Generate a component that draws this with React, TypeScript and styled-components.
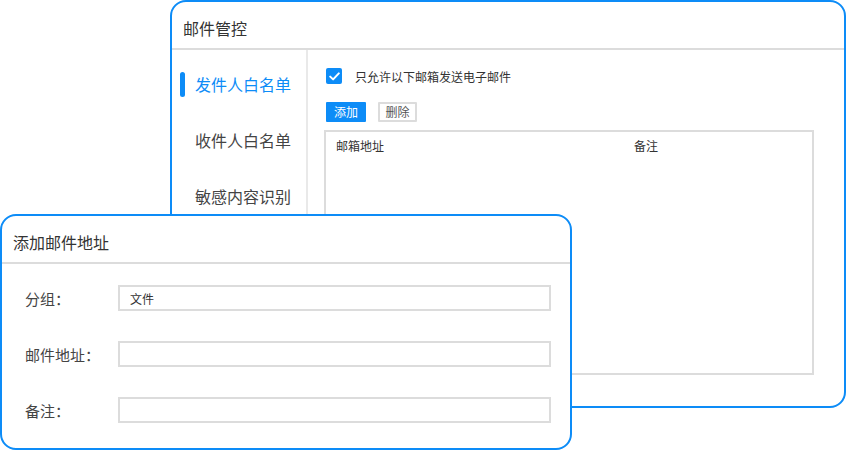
import React from "react";
import styled, { createGlobalStyle } from "styled-components";

const BLUE = "#0d8cf7";
const LINE = "#dcdcdc";
const TEXT = "#3a3a3a";

const GlobalStyle = createGlobalStyle`
  html, body {
    margin: 0;
    padding: 0;
    background: #ffffff;
  }
  body {
    font-family: "Noto Sans CJK SC", "Noto Sans", sans-serif;
    color: ${TEXT};
  }
  * { box-sizing: border-box; }
`;

const Desktop = styled.div`
  position: relative;
  width: 846px;
  height: 450px;
  overflow: hidden;
  background: #fff;
`;

const Window = styled.section<{ $left: number; $top: number; $w: number; $h: number; $z: number }>`
  position: absolute;
  left: ${(p) => p.$left}px;
  top: ${(p) => p.$top}px;
  width: ${(p) => p.$w}px;
  height: ${(p) => p.$h}px;
  z-index: ${(p) => p.$z};
  border: 2px solid ${BLUE};
  border-radius: 16px;
  background: #fff;
  display: flex;
  flex-direction: column;
  overflow: hidden;
`;

const WindowHeader = styled.header`
  height: 48px;
  padding: 6px 11px 0;
  display: flex;
  align-items: center;
  border-bottom: 2px solid ${LINE};
  font-size: 16px;
  color: #333;
  flex-shrink: 0;
`;

const BackBody = styled.div`
  flex: 1;
  display: flex;
`;

const Sidebar = styled.nav`
  width: 136px;
  border-right: 2px solid #e9e9e9;
  padding-top: 6px;
  display: flex;
  flex-direction: column;
  flex-shrink: 0;
`;

const NavItem = styled.div<{ $active?: boolean }>`
  height: 56px;
  display: flex;
  align-items: center;
  gap: 10px;
  padding-left: 8px;
  font-size: 16px;
  color: ${(p) => (p.$active ? BLUE : "#444")};
`;

const NavBar = styled.span<{ $active?: boolean }>`
  width: 5px;
  height: 25px;
  border-radius: 3px;
  background: ${(p) => (p.$active ? BLUE : "transparent")};
`;

const Content = styled.div`
  flex: 1;
  padding: 16px 30px 0 16px;
  display: flex;
  flex-direction: column;
`;

const CheckRow = styled.label`
  display: flex;
  align-items: center;
  gap: 13px;
  height: 20px;
  padding-left: 2px;
  font-size: 12px;
  color: #333;
`;

const CheckBox = styled.span`
  width: 16px;
  height: 16px;
  border-radius: 2px;
  background: ${BLUE};
  display: flex;
  align-items: center;
  justify-content: center;
`;

const ButtonRow = styled.div`
  display: flex;
  gap: 12px;
  margin-top: 16px;
  padding-left: 2px;
`;

const Btn = styled.button<{ $primary?: boolean }>`
  height: 20px;
  width: ${(p) => (p.$primary ? 40 : 39)}px;
  padding: 0;
  font-family: inherit;
  font-size: 12px;
  line-height: 16px;
  border-radius: 1px;
  border: 2px solid ${(p) => (p.$primary ? BLUE : LINE)};
  background: ${(p) => (p.$primary ? BLUE : "#fff")};
  color: ${(p) => (p.$primary ? "#fff" : "#555")};
`;

const Table = styled.div`
  margin-top: 8px;
  height: 245px;
  border: 2px solid ${LINE};
`;

const TableHead = styled.div`
  display: grid;
  grid-template-columns: 298px 1fr;
  padding: 5px 0 0 10px;
  font-size: 12px;
  line-height: 18px;
  color: #333;
`;

const FormBody = styled.div`
  display: grid;
  grid-template-columns: 93px 433px;
  grid-auto-rows: 26px;
  row-gap: 30px;
  align-items: center;
  padding: 21px 0 0 23px;
`;

const Label = styled.span`
  font-size: 15px;
  color: #444;
`;

const Field = styled.div`
  height: 26px;
  border: 2px solid ${LINE};
  padding: 0 10px;
  display: flex;
  align-items: center;
  font-size: 12px;
  color: #333;
`;

export default function App() {
  return (
    <>
      <GlobalStyle />
      <Desktop>
        <Window $left={170} $top={0} $w={676} $h={408} $z={1}>
          <WindowHeader>邮件管控</WindowHeader>
          <BackBody>
            <Sidebar>
              <NavItem $active>
                <NavBar $active />
                发件人白名单
              </NavItem>
              <NavItem>
                <NavBar />
                收件人白名单
              </NavItem>
              <NavItem>
                <NavBar />
                敏感内容识别
              </NavItem>
            </Sidebar>
            <Content>
              <CheckRow>
                <CheckBox>
                  <svg width="11" height="9" viewBox="0 0 11 9">
                    <path d="M1.2 4.6 L4.1 7.4 L9.8 1.4" fill="none" stroke="#fff" strokeWidth="2" strokeLinecap="round" strokeLinejoin="round" />
                  </svg>
                </CheckBox>
                只允许以下邮箱发送电子邮件
              </CheckRow>
              <ButtonRow>
                <Btn $primary>添加</Btn>
                <Btn>删除</Btn>
              </ButtonRow>
              <Table>
                <TableHead>
                  <span>邮箱地址</span>
                  <span>备注</span>
                </TableHead>
              </Table>
            </Content>
          </BackBody>
        </Window>
        <Window $left={0} $top={214} $w={572} $h={236} $z={2}>
          <WindowHeader>添加邮件地址</WindowHeader>
          <FormBody>
            <Label>分组：</Label>
            <Field>文件</Field>
            <Label>邮件地址：</Label>
            <Field />
            <Label>备注：</Label>
            <Field />
          </FormBody>
        </Window>
      </Desktop>
    </>
  );
}
